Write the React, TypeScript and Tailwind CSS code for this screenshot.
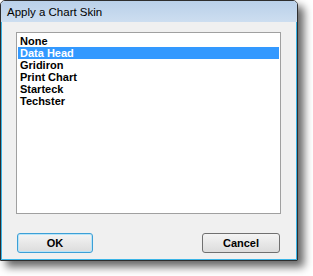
export default function App() {
    const items = ["None", "Data Head", "Gridiron", "Print Chart", "Starteck", "Techster"];
    return (
        <div className="w-[313px] h-[276px] bg-white" style={{ fontFamily: '"Liberation Sans", Arial, sans-serif' }}>
            <div className="w-[298px] h-[261px] flex flex-col border border-[#2e2e2e] rounded-t-[5px] shadow-[6px_6px_8px_rgba(0,0,0,0.6)] overflow-hidden">
                <div className="h-[21px] shrink-0 bg-gradient-to-b from-[#b9d0e9] to-[#cddef0] pl-[6px] pt-[5px] text-[11.5px] leading-[13px] text-black">
                    Apply a Chart Skin
                </div>
                <div className="flex-1 flex flex-col border-x border-b border-[#3ab4e6] bg-[#f0f0f0] pl-[14px] pr-[15px] pt-[10px]">
                    <div className="h-[182px] border border-[#a0a0a0] bg-white pt-[2px] px-[1px]">
                        {items.map((it) => (
                            <div
                                key={it}
                                className={
                                    "h-[12px] pl-[2px] text-[11px] leading-[12px] font-bold " +
                                    (it === "Data Head" ? "bg-[#3399ff] text-white" : "text-black")
                                }
                            >
                                {it}
                            </div>
                        ))}
                    </div>
                    <div className="flex justify-between pt-[19px] px-[1px]">
                        <button className="w-[76px] h-[20px] rounded-[3px] border border-[#3c9fd6] bg-gradient-to-b from-[#f4f4f4] to-[#dcdcdc] text-[11px] font-bold text-black shadow-[inset_0_0_0_1px_#b8e4f8]">
                            OK
                        </button>
                        <button className="w-[78px] h-[20px] rounded-[3px] border border-[#707070] bg-gradient-to-b from-[#f4f4f4] to-[#dcdcdc] text-[11px] font-bold text-black">
                            Cancel
                        </button>
                    </div>
                </div>
            </div>
        </div>
    );
}
